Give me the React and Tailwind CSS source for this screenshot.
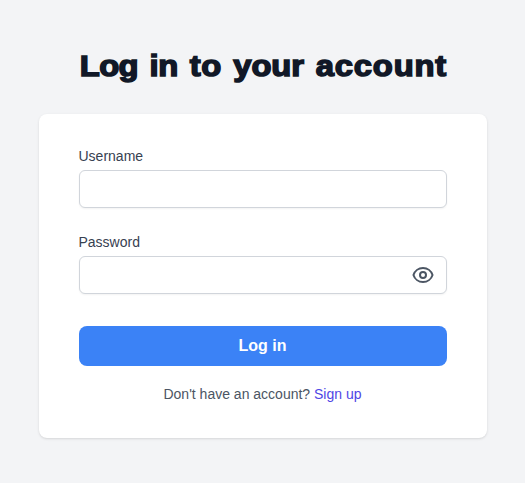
function EyeIcon() {
  return (
    <svg className="size-6" viewBox="0 0 24 24" fill="none" stroke="currentColor" strokeWidth="2" strokeLinecap="round" strokeLinejoin="round">
      <path d="M15 12a3 3 0 11-6 0 3 3 0 016 0z" />
      <path d="M2.458 12C3.732 7.943 7.523 5 12 5c4.478 0 8.268 2.943 9.542 7-1.274 4.057-5.064 7-9.542 7-4.477 0-8.268-2.943-9.542-7z" />
    </svg>
  );
}

function Field({ label, type, children }) {
  return (
    <label className="block">
      <span className="block text-sm text-[#374151]">{label}</span>
      <span className="mt-1 flex h-[38px] items-center rounded-md border border-[#d1d5db] bg-white pr-[11px] pl-3 shadow-[0_1px_2px_0_rgba(0,0,0,0.05)]">
        <input type={type} className="min-w-0 flex-1 text-sm outline-none" />
        {children}
      </span>
    </label>
  );
}

export default function App() {
  return (
    <main className="flex min-h-screen flex-col items-center bg-[#f3f4f6] pt-12 font-['Liberation_Sans',Arial,sans-serif]">
      <h1 className="ml-0.5 scale-x-[1.11] text-[29.5px] leading-9 font-black tracking-[0.4px] [word-spacing:2px] whitespace-nowrap text-[#111827] [-webkit-text-stroke:1.5px_#111827]">
        <span className="tracking-[-0.6px]">Log</span> <span className="tracking-[-0.3px]">in</span> to <span className="tracking-[-0.1px]">your</span> <span className="tracking-[0.75px]">account</span>
      </h1>
      <section className="mt-[30px] h-[324px] w-[448px] rounded-lg bg-white px-10 pt-8 shadow-[0_1px_3px_0_rgba(0,0,0,0.1),0_1px_2px_-1px_rgba(0,0,0,0.1)]">
        <form className="flex flex-col">
          <Field label="Username" type="text" />
          <div className="mt-6">
            <Field label="Password" type="password">
              <button type="button" aria-label="Show password" className="text-[#4b5563]">
                <EyeIcon />
              </button>
            </Field>
          </div>
          <button type="button" className="mt-8 h-10 rounded-lg bg-[#3b82f6] font-bold text-white">
            Log in
          </button>
        </form>
        <p className="mt-[18px] text-center text-sm text-[#4b5563]">
          Don't have an account? <a href="#" className="text-[#4f46e5]">Sign up</a>
        </p>
      </section>
    </main>
  );
}
